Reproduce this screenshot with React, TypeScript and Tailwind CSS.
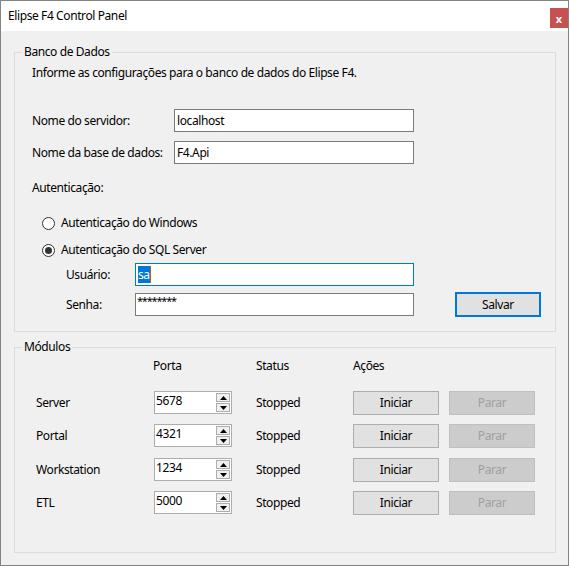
import React from 'react';

const font = { fontFamily: '"Noto Sans", "Segoe UI", sans-serif' };

interface Module {
  name: string;
  port: string;
  gap: string;
}

const modules: Module[] = [
  { name: 'Server', port: '5678', gap: 'mt-[17px]' },
  { name: 'Portal', port: '4321', gap: 'mt-[10px]' },
  { name: 'Workstation', port: '1234', gap: 'mt-[11px]' },
  { name: 'ETL', port: '5000', gap: 'mt-[10px]' },
];

function Radio({ checked, label }: { checked?: boolean; label: string }) {
  return (
    <div className="flex h-[16px] items-center">
      <span className="ml-[27px] flex h-[13px] w-[13px] items-center justify-center rounded-full border border-[#333333] bg-white">
        {checked && <span className="h-[7px] w-[7px] rounded-full bg-[#333333]" />}
      </span>
      <span className="ml-[6px] leading-[16px]">{label}</span>
    </div>
  );
}

function Spinner({ value }: { value: string }) {
  return (
    <div className="flex h-[23px] w-[78px] border border-[#adadad] bg-white">
      <span className="flex-1 pl-[1px] leading-[17px]">{value}</span>
      <div className="my-[1px] mr-[1px] flex w-[14px] flex-col gap-[1px]">
        <span className="flex flex-1 items-center justify-center border border-[#adadad] bg-[#f0f0f0]">
          <svg width="7" height="4" viewBox="0 0 7 4">
            <path d="M3.5 0 L7 4 L0 4 Z" fill="#000" />
          </svg>
        </span>
        <span className="flex flex-1 items-center justify-center border border-[#adadad] bg-[#f0f0f0]">
          <svg width="7" height="4" viewBox="0 0 7 4">
            <path d="M0 0 L7 0 L3.5 4 Z" fill="#000" />
          </svg>
        </span>
      </div>
    </div>
  );
}

export default function App() {
  return (
    <div
      className="flex h-[566px] w-[569px] flex-col border border-[#838383] text-[12px] tracking-[-0.4px] text-black"
      style={font}
    >
      {/* Title bar */}
      <div className="flex h-[30px] items-start bg-white">
        <span className="ml-[7px] mt-[7px] flex-1 leading-[16px]">Elipse F4 Control Panel</span>
        <button className="mt-[7px] flex h-[20px] w-[18px] items-center justify-center bg-[#c75050] text-[11px] font-bold leading-none tracking-normal text-white">
          x
        </button>
      </div>

      <div className="flex flex-1 flex-col bg-[#f0f0f0]">
        {/* Banco de Dados */}
        <div className="relative ml-[13px] mt-[21px] flex h-[280px] w-[542px] flex-col border border-[#dcdcdc]">
          <span className="absolute left-[7px] top-[-9px] bg-[#f0f0f0] px-[2px] leading-[16px]">Banco de Dados</span>

          <p className="ml-[17px] mt-[12px] leading-[16px]">
            Informe as configurações para o banco de dados do Elipse F4.
          </p>

          <div className="mt-[28px] flex h-[23px] items-center">
            <span className="ml-[17px] w-[142px]">Nome do servidor:</span>
            <div className="flex h-[23px] w-[240px] items-center border border-[#7a7a7a] bg-white pl-[2px]">localhost</div>
          </div>
          <div className="mt-[9px] flex h-[23px] items-center">
            <span className="ml-[17px] w-[142px]">Nome da base de dados:</span>
            <div className="flex h-[23px] w-[240px] items-center border border-[#7a7a7a] bg-white pl-[2px]">F4.Api</div>
          </div>

          <span className="ml-[17px] mt-[16px] leading-[16px]">Autenticação:</span>

          <div className="mt-[19px]">
            <Radio label="Autenticação do Windows" />
          </div>
          <div className="mt-[11px]">
            <Radio checked label="Autenticação do SQL Server" />
          </div>

          <div className="mt-[5px] flex h-[23px] items-center">
            <span className="ml-[51px] w-[69px]">Usuário:</span>
            <div className="flex h-[23px] w-[279px] items-center border border-[#0078d7] bg-white pl-[2px]">
              <span className="bg-[#0078d7] leading-[17px] text-white">sa</span>
              <span className="h-[17px] w-[1px] bg-[#c06020]" />
            </div>
          </div>
          <div className="mt-[7px] flex h-[23px] items-center">
            <span className="ml-[51px] w-[69px]">Senha:</span>
            <div className="flex h-[23px] w-[279px] items-start border border-[#7a7a7a] bg-white pl-[1px]">
              <span className="text-[11px] leading-[14px] tracking-[-1.2px]">********</span>
            </div>
            <button className="ml-[41px] flex h-[25px] w-[86px] items-center justify-center border-2 border-[#0078d7] bg-[#e1e1e1]">
              Salvar
            </button>
          </div>
        </div>

        {/* Módulos */}
        <div className="relative ml-[13px] mt-[15px] flex h-[206px] w-[542px] flex-col border border-[#dcdcdc]">
          <span className="absolute left-[7px] top-[-9px] bg-[#f0f0f0] px-[2px] leading-[16px]">Módulos</span>

          <div className="mt-[10px] flex h-[16px] items-center leading-[16px]">
            <span className="ml-[138px] w-[103px]">Porta</span>
            <span className="w-[97px]">Status</span>
            <span>Ações</span>
          </div>

          {modules.map((m) => (
            <div key={m.name} className={`${m.gap} flex h-[23px] items-center`}>
              <span className="ml-[21px] w-[118px]">{m.name}</span>
              <Spinner value={m.port} />
              <span className="ml-[24px] w-[97px]">Stopped</span>
              <button className="flex h-[24px] w-[86px] items-center justify-center border border-[#adadad] bg-[#e1e1e1]">
                Iniciar
              </button>
              <button
                disabled
                className="ml-[10px] flex h-[24px] w-[86px] items-center justify-center border border-[#bfbfbf] bg-[#cccccc] text-[#a0a0a0]"
              >
                Parar
              </button>
            </div>
          ))}
        </div>
      </div>
    </div>
  );
}
